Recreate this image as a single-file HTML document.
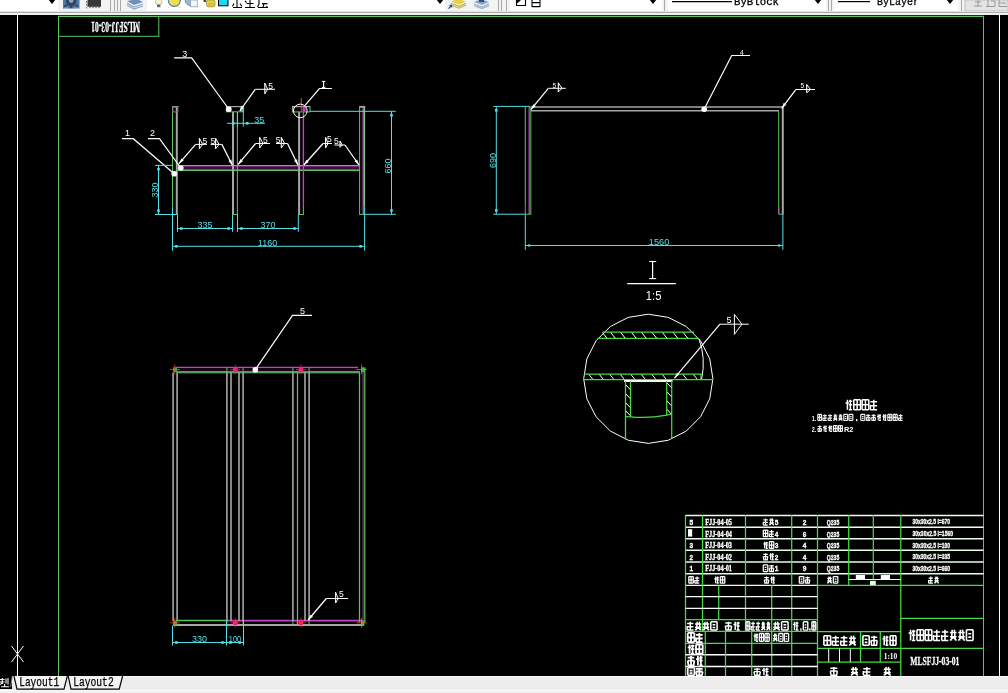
<!DOCTYPE html>
<html><head><meta charset="utf-8"><title>drawing</title>
<style>
html,body{margin:0;padding:0;background:#000;}
body{width:1008px;height:693px;position:relative;overflow:hidden;font-family:"Liberation Sans",sans-serif;}
#tb{position:absolute;left:0;top:0;width:1008px;height:15px;background:#f3f3f3;overflow:hidden;}
#tb .w{position:absolute;top:0;height:11.5px;background:#fff;}
#tb .ln{position:absolute;left:0;width:1008px;}
#tb .sep{position:absolute;top:0;height:11px;width:1px;background:#a8a8a8;}
#tb .arr{position:absolute;top:-1px;width:0;height:0;border-left:4px solid transparent;border-right:4px solid transparent;border-top:5px solid #000;}
#tb .t{position:absolute;font-family:"Liberation Mono",monospace;font-size:11px;line-height:11px;color:#000;top:-4px;white-space:pre;opacity:.99;}
#sb{position:absolute;left:0;top:676px;width:1008px;height:17px;background:#ececec;}
</style></head><body>
<div id="tb">
 <div class="w" style="left:0;width:58px"></div>
 <div class="arr" style="left:48px"></div>
 <div class="w" style="left:147px;width:298px"></div>
 <div class="arr" style="left:436px"></div>
 <div class="w" style="left:510px;width:152px"></div>
 <div class="arr" style="left:649px"></div>
 <div class="w" style="left:668px;width:158px"></div>
 <div class="arr" style="left:814px"></div>
 <div class="w" style="left:834px;width:124px"></div>
 <div class="arr" style="left:946px"></div>
 <div class="sep" style="left:110px"></div><div class="sep" style="left:114px"></div><div class="sep" style="left:117px"></div><div class="sep" style="left:120px"></div>
 <div class="sep" style="left:498px"></div><div class="sep" style="left:501px"></div><div class="sep" style="left:506px"></div>
 <div class="sep" style="left:664px"></div><div class="sep" style="left:828px"></div><div class="sep" style="left:831px"></div><div class="sep" style="left:961px"></div>
 <svg width="1008" height="15" style="position:absolute;left:0;top:0">
  <!-- icons -->
  <rect x="63" y="0" width="16.5" height="8.6" fill="#4a79b2"/><circle cx="71.2" cy="1.2" r="5.2" fill="#3b434f"/><circle cx="71.2" cy="0.6" r="2.3" fill="#7fa6dc"/>
  <path d="M66.5 4.5 l-2 2.6 M75.9 4.5 l2 2.6 M71.2 6 v2" stroke="#3b434f" stroke-width="2"/><path d="M64 8.2 h4 M74.5 8.2 h4" stroke="#a9c8ee" stroke-width="1"/>
  <rect x="87.5" y="0" width="13.5" height="6.8" fill="#38383c"/><path d="M86.5 1 v7 h2 M100 7.6 h-11" stroke="#8c8c90" stroke-width="1" fill="none" stroke-dasharray="2 1"/>
  <path d="M127 1 L137 -1 L143 2 L134 5 Z" fill="#6f8fbc"/><path d="M127 3 L134 7 L143 4 M127 5 L134 9 L143 6" stroke="#8aa6cc" stroke-width="1.2" fill="none"/>
  <ellipse cx="158.7" cy="1.6" rx="3.3" ry="3.2" fill="#fbf4c0" stroke="#b8b090" stroke-width=".8"/><rect x="157" y="4.6" width="3.4" height="2.6" fill="#5a64a0"/>
  <circle cx="174.3" cy="0.4" r="6" fill="#f4dc4a" stroke="#3f7cc0" stroke-width="1.1"/><path d="M169.5 6.5 l-1 1 M179 6.5 l1 1" stroke="#c8a820" stroke-width="1"/>
  <circle cx="190" cy="0.6" r="4.8" fill="#9fb6cc" stroke="#5c7898" stroke-width=".8"/><rect x="190.5" y="0" width="6.8" height="6.8" fill="#f4f6fa" stroke="#8aa0b8" stroke-width=".8"/>
  <rect x="206.5" y="0" width="8.5" height="6.8" rx="2" fill="#e6d544" stroke="#9a8c20" stroke-width=".8"/><path d="M208 3.2 h6 M208 5 h6" stroke="#b8a830" stroke-width=".7"/><rect x="203.6" y="0" width="2.4" height="2" fill="#444"/>
  <rect x="218.5" y="-1" width="9.5" height="6.8" fill="#19d9f2" stroke="#000" stroke-width="1"/>
  <!-- layer name pseudo glyph bottoms -->
  <path d="M233 7.5h9 M237 0v7.5 M234 3.5l-1.5 3 M240 3.5l2 3  M245 7.5h10 M250 0v7.5 M246.5 3.5h7 M245 1l1.5 1.5  M258 7.5h10 M259 0v4l-1.5 3 M262 3.6h5.5 M264 3.6l-1 3.9 M266.5 6l1 1.5" stroke="#000" stroke-width="1.1" fill="none"/>
  <path d="M451 1.5 L458 -1 L466 1.5 L459 4.5 Z" fill="#e6cf3c"/><path d="M451 3.2 L459 6.4 L466 3.2 M451 5 L459 8.2 L466 5" stroke="#c4b23a" stroke-width="1.2" fill="none"/><path d="M448.5 8.6 l3.2-3.2 m0 0 v2.2 m0 -2.2 h-2.2" stroke="#1f3f9c" stroke-width="1.1" fill="none"/>
  <path d="M474 2 L481 -1 L489 2 L482 5 Z" fill="#8aa4c4"/><path d="M474 3.8 L482 7 L489 3.8 M474 5.6 L482 8.6 L489 5.6" stroke="#9db4cf" stroke-width="1.2" fill="none"/><path d="M479 0 h5 v2 h-5z" fill="#2f4f8a"/>
  <path d="M516.5 0 V5.5 H525.5 V0" fill="#fff" stroke="#000" stroke-width="1.1"/><path d="M516.5 0 H521 L516.5 4 Z" fill="#000"/>
  <path d="M532 0 V7 M540 0 V7 M532 2.6 H540 M532 6.6 H540" stroke="#000" stroke-width="1.1" fill="none"/>
  <line x1="672" y1="1.6" x2="732" y2="1.6" stroke="#000" stroke-width="1.2"/>
  <line x1="838" y1="1.6" x2="870" y2="1.6" stroke="#000" stroke-width="1.2"/>
  <defs><filter id="s3" x="0" y="0" width="1008" height="15" filterUnits="userSpaceOnUse"><feGaussianBlur stdDeviation="0.25"/></filter></defs>
  <g filter="url(#s3)"><text x="734" y="4.8" font-family="Liberation Mono, monospace" font-size="11" fill="#000" stroke="#000" stroke-width="0.3" textLength="45" lengthAdjust="spacingAndGlyphs">ByBlock</text>
  <text x="877" y="4.8" font-family="Liberation Mono, monospace" font-size="11" fill="#000" stroke="#000" stroke-width="0.3" textLength="42" lengthAdjust="spacingAndGlyphs">ByLayer</text></g>
  <rect x="965" y="0" width="43" height="11" fill="#e4e4e4" stroke="#bdbdbd" stroke-width="1"/>
  <path d="M974 6h8 M978 0v6.5 M975 2h6  M986 6.5h9 M988 0v6 M991 1h4v5  M999 0v6.5h8 M999 3h7" stroke="#9a9a9a" stroke-width="1" fill="none"/>
 </svg>
 <div class="ln" style="top:11.4px;height:0.8px;background:#e4e4e4"></div>
 <div class="ln" style="top:12.2px;height:1.3px;background:#a9a9a9"></div>
 <div class="ln" style="top:13.5px;height:1.5px;background:#efefef"></div>
</div>
<svg width="1008" height="693" viewBox="0 0 1008 693" style="position:absolute;left:0;top:0">
<defs><filter id="soft" x="0" y="0" width="1008" height="693" filterUnits="userSpaceOnUse"><feGaussianBlur stdDeviation="0.33"/></filter></defs>
<g filter="url(#soft)">
<rect x="0.00" y="15.00" width="1008.00" height="661.00" fill="#000" stroke="none" stroke-width="1" />
<line x1="17.50" y1="15.00" x2="17.50" y2="676.00" stroke="#ffffff" stroke-width="1" />
<line x1="999.50" y1="15.00" x2="999.50" y2="676.00" stroke="#ffffff" stroke-width="1" />
<line x1="58.50" y1="16.00" x2="58.50" y2="676.00" stroke="#5cc45c" stroke-width="1" />
<line x1="58.00" y1="16.40" x2="984.00" y2="16.40" stroke="#5cc45c" stroke-width="1.2" />
<line x1="983.50" y1="16.00" x2="983.50" y2="676.00" stroke="#5cc45c" stroke-width="1" />
<line x1="58.50" y1="36.30" x2="159.20" y2="36.30" stroke="#5cc45c" stroke-width="1" />
<line x1="158.80" y1="16.00" x2="158.80" y2="36.80" stroke="#5cc45c" stroke-width="1" />
<g transform="rotate(180 115.6 26.6)">
<text x="91.20" y="31.50" font-family="Liberation Serif, serif" font-size="14" font-weight="bold" fill="#ffffff" text-anchor="start" textLength="48.80" lengthAdjust="spacingAndGlyphs" stroke="#fff" stroke-width="0.3">MLSFJJ-03-01</text>
</g>
<line x1="11.50" y1="646.00" x2="23.50" y2="662.00" stroke="#ffffff" stroke-width="1" />
<line x1="23.50" y1="646.00" x2="11.50" y2="662.00" stroke="#ffffff" stroke-width="1" />
<line x1="178.00" y1="165.50" x2="359.50" y2="165.50" stroke="#5cc45c" stroke-width="1" />
<rect x="178.00" y="166.20" width="181.50" height="3.80" fill="#2c062c" stroke="none" stroke-width="1" />
<line x1="178.00" y1="166.70" x2="359.50" y2="166.70" stroke="#9a3c9a" stroke-width="0.8" />
<line x1="178.00" y1="169.40" x2="359.50" y2="169.40" stroke="#b646b6" stroke-width="0.9" />
<line x1="178.00" y1="170.50" x2="359.50" y2="170.50" stroke="#5cc45c" stroke-width="1" />
<line x1="172.50" y1="106.50" x2="172.50" y2="206.50" stroke="#5cc45c" stroke-width="1" />
<line x1="172.50" y1="206.50" x2="172.50" y2="250.80" stroke="#4fe0ea" stroke-width="1" />
<line x1="176.80" y1="107.00" x2="176.80" y2="214.50" stroke="#a6a6a6" stroke-width="2" />
<line x1="172.00" y1="106.50" x2="178.60" y2="106.50" stroke="#5cc45c" stroke-width="1" />
<rect x="172.90" y="107.30" width="5.00" height="4.60" fill="none" stroke="#c044c0" stroke-width="1" />
<line x1="233.00" y1="112.00" x2="233.00" y2="214.50" stroke="#a6a6a6" stroke-width="2" />
<line x1="237.40" y1="112.00" x2="237.40" y2="214.50" stroke="#5cc45c" stroke-width="1" />
<rect x="226.20" y="106.60" width="5.20" height="5.20" fill="#3ccf3c" stroke="none" stroke-width="1" opacity="0.9"/>
<rect x="240.20" y="106.60" width="3.20" height="5.20" fill="#3ccf3c" stroke="none" stroke-width="1" opacity="0.9"/>
<rect x="226.40" y="106.50" width="16.80" height="5.30" fill="none" stroke="#5cc45c" stroke-width="1" />
<line x1="226.40" y1="106.60" x2="243.20" y2="106.60" stroke="#a6a6a6" stroke-width="1.2" />
<line x1="240.00" y1="111.30" x2="242.60" y2="107.20" stroke="#c044c0" stroke-width="1.3" />
<line x1="232.00" y1="214.50" x2="237.90" y2="214.50" stroke="#5cc45c" stroke-width="1" />
<line x1="299.10" y1="112.00" x2="299.10" y2="214.50" stroke="#a6a6a6" stroke-width="2" />
<line x1="303.40" y1="112.00" x2="303.40" y2="204.30" stroke="#c044c0" stroke-width="1.4" />
<line x1="303.40" y1="204.30" x2="303.40" y2="214.50" stroke="#5cc45c" stroke-width="1" />
<rect x="292.40" y="106.50" width="17.60" height="5.40" fill="none" stroke="#5cc45c" stroke-width="1" />
<line x1="292.40" y1="106.60" x2="310.00" y2="106.60" stroke="#a6a6a6" stroke-width="1.4" />
<line x1="292.90" y1="107.00" x2="292.90" y2="111.50" stroke="#a6a6a6" stroke-width="1.4" />
<rect x="302.50" y="107.30" width="3.20" height="4.20" fill="#c044c0" stroke="none" stroke-width="1" />
<line x1="298.00" y1="214.50" x2="303.90" y2="214.50" stroke="#5cc45c" stroke-width="1" />
<line x1="359.60" y1="106.50" x2="359.60" y2="214.50" stroke="#5cc45c" stroke-width="1" />
<rect x="360.80" y="107.00" width="2.40" height="107.50" fill="#2c062c" stroke="none" stroke-width="1" />
<line x1="363.30" y1="107.00" x2="363.30" y2="214.50" stroke="#b262b6" stroke-width="1.2" />
<line x1="364.50" y1="106.50" x2="364.50" y2="206.50" stroke="#8cc48c" stroke-width="1.1" />
<line x1="364.60" y1="206.50" x2="364.60" y2="250.80" stroke="#4fe0ea" stroke-width="1" />
<line x1="359.30" y1="106.80" x2="365.20" y2="106.80" stroke="#a6a6a6" stroke-width="1.8" />
<line x1="359.30" y1="214.50" x2="364.60" y2="214.50" stroke="#5cc45c" stroke-width="1" />
<line x1="301.30" y1="98.00" x2="301.30" y2="111.30" stroke="#ff3a1a" stroke-width="1" />
<circle cx="300.30" cy="110.90" r="6.8" fill="none" stroke="#ffffff" stroke-width="1"/>
<polyline points="305.00,105.30 319.40,88.50 331.90,88.50" stroke="#ffffff" stroke-width="1.2" fill="none" />
<line x1="323.60" y1="81.40" x2="323.60" y2="87.40" stroke="#ffffff" stroke-width="1.1" />
<line x1="321.80" y1="81.40" x2="325.40" y2="81.40" stroke="#ffffff" stroke-width="1" />
<line x1="321.80" y1="87.40" x2="325.40" y2="87.40" stroke="#ffffff" stroke-width="1" />
<circle cx="180.80" cy="168.00" r="2.8" fill="#ffffff" stroke="none" stroke-width="1"/>
<circle cx="174.20" cy="173.80" r="2.8" fill="#ffffff" stroke="none" stroke-width="1"/>
<circle cx="228.70" cy="109.20" r="2.8" fill="#ffffff" stroke="none" stroke-width="1"/>
<polyline points="174.20,57.80 191.70,57.80 228.70,109.00" stroke="#ffffff" stroke-width="1.2" fill="none" />
<text x="184.70" y="56.80" font-family="Liberation Sans, sans-serif" font-size="9" font-weight="normal" fill="#ffffff" text-anchor="middle" >3</text>
<polyline points="122.00,138.70 133.30,138.70 174.20,173.80" stroke="#ffffff" stroke-width="1.2" fill="none" />
<text x="127.60" y="136.00" font-family="Liberation Sans, sans-serif" font-size="9" font-weight="normal" fill="#ffffff" text-anchor="middle" >1</text>
<polyline points="148.00,138.70 159.50,138.70 180.80,168.00" stroke="#ffffff" stroke-width="1.2" fill="none" />
<text x="152.60" y="136.00" font-family="Liberation Sans, sans-serif" font-size="9" font-weight="normal" fill="#ffffff" text-anchor="middle" >2</text>
<line x1="239.80" y1="111.00" x2="255.20" y2="89.30" stroke="#ffffff" stroke-width="1.25" />
<polygon points="239.80,111.00 241.74,105.51 244.35,107.36" fill="#ffffff"/>
<line x1="255.20" y1="89.30" x2="275.00" y2="89.30" stroke="#ffffff" stroke-width="1" />
<line x1="264.80" y1="83.00" x2="264.80" y2="93.80" stroke="#ffffff" stroke-width="1.1" />
<polyline points="264.80,83.00 267.60,89.30 264.80,93.80" stroke="#ffffff" stroke-width="1" fill="none" />
<text x="268.20" y="89.20" font-family="Liberation Sans, sans-serif" font-size="8.5" font-weight="normal" fill="#ffffff" text-anchor="start" >5</text>
<line x1="178.80" y1="163.80" x2="195.60" y2="144.40" stroke="#ffffff" stroke-width="1.25" />
<polygon points="178.80,163.80 181.26,158.52 183.68,160.61" fill="#ffffff"/>
<line x1="195.60" y1="144.40" x2="206.90" y2="144.40" stroke="#ffffff" stroke-width="1" />
<line x1="199.40" y1="138.20" x2="199.40" y2="148.80" stroke="#ffffff" stroke-width="1.1" />
<polyline points="199.40,138.20 202.70,144.40 199.40,148.80" stroke="#ffffff" stroke-width="1" fill="none" />
<text x="202.60" y="143.80" font-family="Liberation Sans, sans-serif" font-size="8.5" font-weight="normal" fill="#ffffff" text-anchor="start" >5</text>
<line x1="210.60" y1="144.40" x2="221.90" y2="144.40" stroke="#ffffff" stroke-width="1" />
<line x1="221.90" y1="144.40" x2="232.40" y2="165.20" stroke="#ffffff" stroke-width="1.25" />
<polygon points="232.40,165.20 228.45,160.92 231.30,159.48" fill="#ffffff"/>
<line x1="215.60" y1="138.20" x2="215.60" y2="148.80" stroke="#ffffff" stroke-width="1.1" />
<polyline points="215.60,138.20 219.00,144.40 215.60,148.80" stroke="#ffffff" stroke-width="1" fill="none" />
<text x="210.40" y="143.80" font-family="Liberation Sans, sans-serif" font-size="8.5" font-weight="normal" fill="#ffffff" text-anchor="start" >5</text>
<line x1="238.10" y1="164.40" x2="255.60" y2="143.50" stroke="#ffffff" stroke-width="1.25" />
<polygon points="238.10,164.40 240.47,159.08 242.92,161.13" fill="#ffffff"/>
<line x1="255.60" y1="143.50" x2="270.00" y2="143.50" stroke="#ffffff" stroke-width="1" />
<line x1="259.70" y1="137.30" x2="259.70" y2="147.90" stroke="#ffffff" stroke-width="1.1" />
<polyline points="259.70,137.30 263.00,143.50 259.70,147.90" stroke="#ffffff" stroke-width="1" fill="none" />
<text x="263.00" y="142.90" font-family="Liberation Sans, sans-serif" font-size="8.5" font-weight="normal" fill="#ffffff" text-anchor="start" >5</text>
<line x1="276.00" y1="143.50" x2="287.50" y2="143.50" stroke="#ffffff" stroke-width="1" />
<line x1="287.50" y1="143.50" x2="298.00" y2="165.00" stroke="#ffffff" stroke-width="1.25" />
<polygon points="298.00,165.00 294.10,160.67 296.98,159.27" fill="#ffffff"/>
<line x1="281.30" y1="137.30" x2="281.30" y2="147.90" stroke="#ffffff" stroke-width="1.1" />
<polyline points="281.30,137.30 284.60,143.50 281.30,147.90" stroke="#ffffff" stroke-width="1" fill="none" />
<text x="275.80" y="142.90" font-family="Liberation Sans, sans-serif" font-size="8.5" font-weight="normal" fill="#ffffff" text-anchor="start" >5</text>
<line x1="303.80" y1="165.00" x2="323.10" y2="143.50" stroke="#ffffff" stroke-width="1.25" />
<polygon points="303.80,165.00 306.35,159.76 308.73,161.90" fill="#ffffff"/>
<line x1="323.10" y1="143.50" x2="331.90" y2="143.50" stroke="#ffffff" stroke-width="1" />
<line x1="325.60" y1="137.30" x2="325.60" y2="147.90" stroke="#ffffff" stroke-width="1.1" />
<polyline points="325.60,137.30 328.00,143.50 325.60,147.90" stroke="#ffffff" stroke-width="1" fill="none" />
<text x="327.00" y="141.80" font-family="Liberation Sans, sans-serif" font-size="8.5" font-weight="normal" fill="#ffffff" text-anchor="start" >5</text>
<line x1="334.40" y1="145.00" x2="345.00" y2="145.00" stroke="#ffffff" stroke-width="1" />
<line x1="345.00" y1="145.00" x2="359.00" y2="165.00" stroke="#ffffff" stroke-width="1.25" />
<polygon points="359.00,165.00 354.48,161.33 357.10,159.49" fill="#ffffff"/>
<line x1="340.00" y1="140.90" x2="340.00" y2="147.30" stroke="#ffffff" stroke-width="1.1" />
<polyline points="340.00,140.90 342.20,145.00 340.00,147.30" stroke="#ffffff" stroke-width="1" fill="none" />
<text x="334.00" y="144.40" font-family="Liberation Sans, sans-serif" font-size="8.5" font-weight="normal" fill="#ffffff" text-anchor="start" >5</text>
<line x1="227.00" y1="123.30" x2="265.00" y2="123.30" stroke="#4fe0ea" stroke-width="1" />
<line x1="237.40" y1="112.00" x2="237.40" y2="126.70" stroke="#4fe0ea" stroke-width="1" />
<line x1="243.30" y1="106.80" x2="243.30" y2="126.70" stroke="#4fe0ea" stroke-width="1" />
<rect x="232.00" y="122.00" width="2.60" height="2.60" fill="#4fe0ea" stroke="none" stroke-width="1" />
<rect x="245.90" y="122.00" width="2.60" height="2.60" fill="#4fe0ea" stroke="none" stroke-width="1" />
<text x="259.20" y="123.40" font-family="Liberation Sans, sans-serif" font-size="9" font-weight="normal" fill="#4fe0ea" text-anchor="middle" transform="translate(259.20 123.40) scale(1 1.04) translate(-259.20 -123.40)" >35</text>
<line x1="155.00" y1="165.40" x2="172.50" y2="165.40" stroke="#4fe0ea" stroke-width="1" />
<line x1="155.00" y1="214.50" x2="177.50" y2="214.50" stroke="#4fe0ea" stroke-width="1" />
<line x1="158.50" y1="165.40" x2="158.50" y2="214.50" stroke="#4fe0ea" stroke-width="1" />
<rect x="157.20" y="167.90" width="2.60" height="2.60" fill="#4fe0ea" stroke="none" stroke-width="1" />
<rect x="157.20" y="209.30" width="2.60" height="2.60" fill="#4fe0ea" stroke="none" stroke-width="1" />
<text x="157.70" y="190.00" font-family="Liberation Sans, sans-serif" font-size="9" font-weight="normal" fill="#4fe0ea" text-anchor="middle" transform="rotate(-90 157.70 190.00) translate(157.70 190.00) scale(1 1.04) translate(-157.70 -190.00)" >330</text>
<line x1="177.50" y1="214.50" x2="177.50" y2="231.80" stroke="#4fe0ea" stroke-width="1" />
<line x1="232.50" y1="214.50" x2="232.50" y2="231.80" stroke="#4fe0ea" stroke-width="1" />
<line x1="237.50" y1="214.50" x2="237.50" y2="231.80" stroke="#4fe0ea" stroke-width="1" />
<line x1="298.30" y1="214.50" x2="298.30" y2="231.80" stroke="#4fe0ea" stroke-width="1" />
<line x1="177.50" y1="228.50" x2="232.50" y2="228.50" stroke="#4fe0ea" stroke-width="1" />
<line x1="237.50" y1="228.50" x2="298.30" y2="228.50" stroke="#4fe0ea" stroke-width="1" />
<rect x="180.00" y="227.20" width="2.60" height="2.60" fill="#4fe0ea" stroke="none" stroke-width="1" />
<rect x="227.30" y="227.20" width="2.60" height="2.60" fill="#4fe0ea" stroke="none" stroke-width="1" />
<rect x="240.20" y="227.20" width="2.60" height="2.60" fill="#4fe0ea" stroke="none" stroke-width="1" />
<rect x="293.20" y="227.20" width="2.60" height="2.60" fill="#4fe0ea" stroke="none" stroke-width="1" />
<text x="205.00" y="227.70" font-family="Liberation Sans, sans-serif" font-size="9" font-weight="normal" fill="#4fe0ea" text-anchor="middle" transform="translate(205.00 227.70) scale(1 1.04) translate(-205.00 -227.70)" >335</text>
<text x="268.00" y="227.70" font-family="Liberation Sans, sans-serif" font-size="9" font-weight="normal" fill="#4fe0ea" text-anchor="middle" transform="translate(268.00 227.70) scale(1 1.04) translate(-268.00 -227.70)" >370</text>
<line x1="172.50" y1="246.30" x2="364.60" y2="246.30" stroke="#4fe0ea" stroke-width="1" />
<rect x="175.10" y="245.00" width="2.60" height="2.60" fill="#4fe0ea" stroke="none" stroke-width="1" />
<rect x="359.30" y="245.00" width="2.60" height="2.60" fill="#4fe0ea" stroke="none" stroke-width="1" />
<text x="267.50" y="246.50" font-family="Liberation Sans, sans-serif" font-size="9" font-weight="normal" fill="#4fe0ea" text-anchor="middle" transform="translate(267.50 246.50) scale(1 1.04) translate(-267.50 -246.50)" >1160</text>
<line x1="310.00" y1="111.30" x2="395.80" y2="111.30" stroke="#4fe0ea" stroke-width="1" />
<line x1="364.60" y1="214.30" x2="395.80" y2="214.30" stroke="#4fe0ea" stroke-width="1" />
<line x1="391.50" y1="111.30" x2="391.50" y2="214.30" stroke="#4fe0ea" stroke-width="1" />
<rect x="390.20" y="114.00" width="2.60" height="2.60" fill="#4fe0ea" stroke="none" stroke-width="1" />
<rect x="390.20" y="209.20" width="2.60" height="2.60" fill="#4fe0ea" stroke="none" stroke-width="1" />
<text x="390.60" y="166.00" font-family="Liberation Sans, sans-serif" font-size="9" font-weight="normal" fill="#4fe0ea" text-anchor="middle" transform="rotate(-90 390.60 166.00) translate(390.60 166.00) scale(1 1.04) translate(-390.60 -166.00)" >660</text>
<line x1="530.80" y1="107.00" x2="783.60" y2="107.00" stroke="#a6a6a6" stroke-width="1.5" />
<line x1="530.80" y1="110.80" x2="779.00" y2="110.80" stroke="#a6a6a6" stroke-width="1.5" />
<line x1="525.30" y1="106.50" x2="525.30" y2="206.50" stroke="#5cc45c" stroke-width="1" />
<line x1="525.30" y1="206.50" x2="525.30" y2="214.20" stroke="#c044c0" stroke-width="1.2" />
<line x1="525.30" y1="214.20" x2="525.30" y2="249.80" stroke="#4fe0ea" stroke-width="1" />
<line x1="529.20" y1="107.00" x2="529.20" y2="214.20" stroke="#c044c0" stroke-width="1.3" />
<line x1="530.80" y1="106.50" x2="530.80" y2="214.20" stroke="#5cc45c" stroke-width="1" />
<line x1="525.30" y1="214.20" x2="531.20" y2="214.20" stroke="#5cc45c" stroke-width="1" />
<line x1="778.70" y1="111.00" x2="778.70" y2="214.20" stroke="#5cc45c" stroke-width="1" />
<line x1="782.80" y1="106.50" x2="782.80" y2="214.20" stroke="#a6a6a6" stroke-width="2" />
<line x1="778.70" y1="214.20" x2="783.50" y2="214.20" stroke="#5cc45c" stroke-width="1" />
<line x1="778.90" y1="207.00" x2="778.90" y2="214.00" stroke="#c044c0" stroke-width="1" />
<line x1="782.90" y1="214.20" x2="782.90" y2="249.80" stroke="#4fe0ea" stroke-width="1" />
<line x1="493.30" y1="106.40" x2="530.00" y2="106.40" stroke="#4fe0ea" stroke-width="1" />
<line x1="493.30" y1="214.20" x2="525.30" y2="214.20" stroke="#4fe0ea" stroke-width="1" />
<line x1="496.30" y1="106.40" x2="496.30" y2="214.20" stroke="#4fe0ea" stroke-width="1" />
<rect x="495.00" y="109.00" width="2.60" height="2.60" fill="#4fe0ea" stroke="none" stroke-width="1" />
<rect x="495.00" y="209.10" width="2.60" height="2.60" fill="#4fe0ea" stroke="none" stroke-width="1" />
<text x="495.60" y="160.40" font-family="Liberation Sans, sans-serif" font-size="9" font-weight="normal" fill="#4fe0ea" text-anchor="middle" transform="rotate(-90 495.60 160.40) translate(495.60 160.40) scale(1 1.04) translate(-495.60 -160.40)" >690</text>
<line x1="525.30" y1="245.50" x2="782.90" y2="245.50" stroke="#4fe0ea" stroke-width="1" />
<rect x="528.10" y="244.40" width="2.20" height="2.20" fill="#4fe0ea" stroke="none" stroke-width="1" />
<rect x="777.90" y="244.40" width="2.20" height="2.20" fill="#4fe0ea" stroke="none" stroke-width="1" />
<text x="648.80" y="245.00" font-family="Liberation Sans, sans-serif" font-size="8.5" font-weight="normal" fill="#4fe0ea" text-anchor="start" textLength="20.60" lengthAdjust="spacingAndGlyphs" >1560</text>
<circle cx="704.20" cy="109.20" r="2.8" fill="#ffffff" stroke="none" stroke-width="1"/>
<polyline points="704.20,109.00 731.70,55.50 750.00,55.50" stroke="#ffffff" stroke-width="1.2" fill="none" />
<text x="741.70" y="54.80" font-family="Liberation Sans, sans-serif" font-size="6.5" font-weight="normal" fill="#ffffff" text-anchor="middle" >4</text>
<line x1="548.30" y1="88.30" x2="548.30" y2="88.30" stroke="#ffffff" stroke-width="1" />
<line x1="548.30" y1="88.30" x2="530.90" y2="109.70" stroke="#ffffff" stroke-width="1.25" />
<polygon points="530.90,109.70 533.19,104.35 535.67,106.36" fill="#ffffff"/>
<line x1="558.30" y1="82.80" x2="558.30" y2="92.00" stroke="#ffffff" stroke-width="1.1" />
<polyline points="558.30,82.80 562.00,88.30 558.30,92.00" stroke="#ffffff" stroke-width="1" fill="none" />
<text x="552.60" y="87.60" font-family="Liberation Sans, sans-serif" font-size="6.5" font-weight="normal" fill="#ffffff" text-anchor="start" >5</text>
<line x1="548.30" y1="88.30" x2="565.80" y2="88.30" stroke="#ffffff" stroke-width="1" />
<line x1="781.70" y1="108.30" x2="795.80" y2="89.50" stroke="#ffffff" stroke-width="1.25" />
<polygon points="781.70,108.30 783.78,102.86 786.34,104.78" fill="#ffffff"/>
<line x1="795.80" y1="89.50" x2="815.00" y2="89.50" stroke="#ffffff" stroke-width="1" />
<line x1="806.70" y1="84.40" x2="806.70" y2="92.80" stroke="#ffffff" stroke-width="1.1" />
<polyline points="806.70,84.40 810.50,89.50 806.70,92.80" stroke="#ffffff" stroke-width="1" fill="none" />
<text x="800.60" y="88.20" font-family="Liberation Sans, sans-serif" font-size="6.5" font-weight="normal" fill="#ffffff" text-anchor="start" >5</text>
<polyline points="648.30,443.40 628.34,440.24 610.33,431.06 596.04,416.77 586.86,398.76 583.70,378.80 586.86,358.84 596.04,340.83 610.33,326.54 628.34,317.36 648.30,314.20 668.26,317.36 686.27,326.54 700.56,340.83 709.74,358.84 712.90,378.80 709.74,398.76 700.56,416.77 686.27,431.06 668.26,440.24 648.30,443.40" stroke="#ffffff" stroke-width="1" fill="none" />
<line x1="652.60" y1="261.50" x2="652.60" y2="278.60" stroke="#ffffff" stroke-width="1.2" />
<line x1="649.20" y1="261.50" x2="656.20" y2="261.50" stroke="#ffffff" stroke-width="1.1" />
<line x1="649.20" y1="278.60" x2="656.20" y2="278.60" stroke="#ffffff" stroke-width="1.1" />
<line x1="627.20" y1="283.70" x2="675.80" y2="283.70" stroke="#ffffff" stroke-width="1.2" />
<text x="653.60" y="300.40" font-family="Liberation Sans, sans-serif" font-size="12" font-weight="normal" fill="#ffffff" text-anchor="middle" textLength="15.50" lengthAdjust="spacingAndGlyphs" >1:5</text>
<line x1="602.50" y1="332.20" x2="694.20" y2="332.20" stroke="#44dc44" stroke-width="1.25" />
<line x1="597.50" y1="338.40" x2="698.70" y2="338.40" stroke="#44dc44" stroke-width="1.25" />
<line x1="602.50" y1="332.60" x2="606.80" y2="338.00" stroke="#ffffff" stroke-width="1" />
<line x1="610.80" y1="332.60" x2="615.10" y2="338.00" stroke="#ffffff" stroke-width="1" />
<line x1="620.80" y1="332.60" x2="625.10" y2="338.00" stroke="#ffffff" stroke-width="1" />
<line x1="631.70" y1="332.60" x2="636.00" y2="338.00" stroke="#ffffff" stroke-width="1" />
<line x1="641.70" y1="332.60" x2="646.00" y2="338.00" stroke="#ffffff" stroke-width="1" />
<line x1="652.20" y1="332.60" x2="656.50" y2="338.00" stroke="#ffffff" stroke-width="1" />
<line x1="662.50" y1="332.60" x2="666.80" y2="338.00" stroke="#ffffff" stroke-width="1" />
<line x1="673.30" y1="332.60" x2="677.60" y2="338.00" stroke="#ffffff" stroke-width="1" />
<line x1="683.30" y1="332.60" x2="687.60" y2="338.00" stroke="#ffffff" stroke-width="1" />
<line x1="584.00" y1="374.20" x2="701.70" y2="374.20" stroke="#44dc44" stroke-width="1.25" />
<line x1="583.80" y1="379.50" x2="713.00" y2="379.50" stroke="#44dc44" stroke-width="1.25" />
<line x1="589.00" y1="374.60" x2="592.60" y2="379.10" stroke="#ffffff" stroke-width="1" />
<line x1="599.50" y1="374.60" x2="603.10" y2="379.10" stroke="#ffffff" stroke-width="1" />
<line x1="610.00" y1="374.60" x2="613.60" y2="379.10" stroke="#ffffff" stroke-width="1" />
<line x1="620.50" y1="374.60" x2="624.10" y2="379.10" stroke="#ffffff" stroke-width="1" />
<line x1="631.00" y1="374.60" x2="634.60" y2="379.10" stroke="#ffffff" stroke-width="1" />
<line x1="641.50" y1="374.60" x2="645.10" y2="379.10" stroke="#ffffff" stroke-width="1" />
<line x1="652.00" y1="374.60" x2="655.60" y2="379.10" stroke="#ffffff" stroke-width="1" />
<line x1="662.50" y1="374.60" x2="666.10" y2="379.10" stroke="#ffffff" stroke-width="1" />
<line x1="683.00" y1="374.60" x2="686.60" y2="379.10" stroke="#ffffff" stroke-width="1" />
<line x1="693.50" y1="374.60" x2="697.10" y2="379.10" stroke="#ffffff" stroke-width="1" />
<line x1="700.80" y1="374.20" x2="700.80" y2="379.50" stroke="#44dc44" stroke-width="1" />
<path d="M699 339 Q706 358 701.7 379" stroke="#ffffff" stroke-width="1" fill="none"/>
<line x1="624.00" y1="380.90" x2="672.50" y2="380.90" stroke="#e8ffe8" stroke-width="2" />
<line x1="625.50" y1="381.00" x2="625.50" y2="439.60" stroke="#44dc44" stroke-width="1.25" />
<line x1="630.50" y1="381.00" x2="630.50" y2="416.70" stroke="#44dc44" stroke-width="1.25" />
<line x1="666.70" y1="381.00" x2="666.70" y2="415.20" stroke="#44dc44" stroke-width="1.25" />
<line x1="671.70" y1="381.00" x2="671.70" y2="438.40" stroke="#44dc44" stroke-width="1.25" />
<path d="M625.5 416.6 L630.5 416.8 Q648 418.6 666.7 415.2 L671.7 414" stroke="#44dc44" stroke-width="1.2" fill="none"/>
<line x1="626.00" y1="385.00" x2="630.20" y2="389.60" stroke="#ffffff" stroke-width="1" />
<line x1="626.00" y1="394.00" x2="630.20" y2="398.60" stroke="#ffffff" stroke-width="1" />
<line x1="626.00" y1="403.00" x2="630.20" y2="407.60" stroke="#ffffff" stroke-width="1" />
<line x1="626.00" y1="411.00" x2="630.20" y2="415.60" stroke="#ffffff" stroke-width="1" />
<line x1="667.20" y1="383.00" x2="671.30" y2="387.60" stroke="#ffffff" stroke-width="1" />
<line x1="667.20" y1="392.00" x2="671.30" y2="396.60" stroke="#ffffff" stroke-width="1" />
<line x1="667.20" y1="401.00" x2="671.30" y2="405.60" stroke="#ffffff" stroke-width="1" />
<line x1="667.20" y1="409.50" x2="671.30" y2="414.10" stroke="#ffffff" stroke-width="1" />
<line x1="674.40" y1="378.20" x2="720.00" y2="324.20" stroke="#ffffff" stroke-width="1.2" />
<polygon points="674.40,378.20 677.13,372.65 679.42,374.58" fill="#ffffff"/>
<line x1="720.00" y1="324.20" x2="748.80" y2="324.20" stroke="#ffffff" stroke-width="1" />
<line x1="734.40" y1="314.40" x2="734.40" y2="334.40" stroke="#ffffff" stroke-width="1" />
<polyline points="734.40,314.40 741.90,324.20 734.40,334.40" stroke="#ffffff" stroke-width="1" fill="none" />
<text x="726.60" y="322.80" font-family="Liberation Sans, sans-serif" font-size="9" font-weight="normal" fill="#ffffff" text-anchor="start" >5</text>
<path d="M847.40 399.70L847.40 409.70 M845.50 402.88L848.92 402.88 M848.85 401.29L852.20 401.29 M848.85 404.70L852.20 404.70 M850.37 399.70L850.37 409.70 M848.85 409.70L852.20 409.70" stroke="#ffffff" stroke-width="1.5" fill="none" opacity="1.0"/>
<path d="M853.80 399.70L860.50 399.70 M853.80 399.70L853.80 409.70 M860.50 399.70L860.50 409.70 M853.80 404.70L860.50 404.70 M853.80 409.70L860.50 409.70 M857.15 399.70L857.15 409.70" stroke="#ffffff" stroke-width="1.5" fill="none" opacity="1.0"/>
<path d="M862.10 399.70L868.80 399.70 M862.10 399.70L862.10 409.70 M868.80 399.70L868.80 409.70 M862.10 404.70L868.80 404.70 M862.10 409.70L868.80 409.70 M865.45 399.70L865.45 409.70" stroke="#ffffff" stroke-width="1.5" fill="none" opacity="1.0"/>
<path d="M870.40 401.82L877.10 401.82 M873.75 399.70L873.75 409.70 M870.40 405.76L877.10 405.76 M870.40 409.70L877.10 409.70 M870.40 404.70L870.40 409.70" stroke="#ffffff" stroke-width="1.5" fill="none" opacity="1.0"/>
<text x="811.70" y="420.60" font-family="Liberation Sans, sans-serif" font-size="7" font-weight="bold" fill="#ffffff" text-anchor="start" textLength="4.50" lengthAdjust="spacingAndGlyphs" >1.</text>
<path d="M817.80 414.30L821.60 414.30 M817.80 414.30L817.80 420.50 M821.60 414.30L821.60 420.50 M817.80 417.40L821.60 417.40 M817.80 420.50L821.60 420.50 M819.70 414.30L819.70 420.50" stroke="#ffffff" stroke-width="1.2" fill="none" opacity="0.95"/>
<path d="M823.00 415.66L826.80 415.66 M824.90 414.30L824.90 420.50 M823.00 418.08L826.80 418.08 M823.00 420.50L826.80 420.50 M823.00 417.40L823.00 420.50" stroke="#ffffff" stroke-width="1.2" fill="none" opacity="0.95"/>
<path d="M828.20 415.66L832.00 415.66 M830.10 414.30L830.10 420.50 M828.20 418.08L832.00 418.08 M828.20 420.50L832.00 420.50 M828.20 417.40L828.20 420.50" stroke="#ffffff" stroke-width="1.2" fill="none" opacity="0.95"/>
<path d="M833.40 416.00L837.20 416.00 M834.81 414.30L834.34 420.50 M835.79 414.30L836.50 420.50 M833.40 418.42L837.20 418.42 M833.40 420.50L835.30 418.76 M835.30 418.76L837.20 420.50" stroke="#ffffff" stroke-width="1.2" fill="none" opacity="0.95"/>
<path d="M838.60 416.00L842.40 416.00 M840.01 414.30L839.54 420.50 M840.99 414.30L841.69 420.50 M838.60 418.42L842.40 418.42 M838.60 420.50L840.50 418.76 M840.50 418.76L842.40 420.50" stroke="#ffffff" stroke-width="1.2" fill="none" opacity="0.95"/>
<path d="M843.80 414.30L843.80 420.50 M843.80 414.30L847.60 414.30 M847.60 414.30L847.60 420.50 M844.97 416.68L846.43 416.68 M844.97 418.72L846.43 418.72 M843.80 420.50L847.60 420.50" stroke="#ffffff" stroke-width="1.2" fill="none" opacity="0.95"/>
<path d="M849.00 414.30L849.00 420.50 M849.00 414.30L852.80 414.30 M852.80 414.30L852.80 420.50 M850.17 416.68L851.63 416.68 M850.17 418.72L851.63 418.72 M849.00 420.50L852.80 420.50" stroke="#ffffff" stroke-width="1.2" fill="none" opacity="0.95"/>
<rect x="856.00" y="419.00" width="1.40" height="2.20" fill="#ffffff" stroke="none" stroke-width="1" />
<path d="M860.80 414.30L860.80 420.50 M860.80 414.30L864.80 414.30 M864.80 414.30L864.80 420.50 M862.02 416.68L863.57 416.68 M862.02 418.72L863.57 418.72 M860.80 420.50L864.80 420.50" stroke="#ffffff" stroke-width="1.2" fill="none" opacity="0.95"/>
<path d="M866.20 415.32L870.20 415.32 M868.20 414.30L868.20 417.40 M866.20 417.40L870.20 417.40 M866.20 417.40L866.69 420.50 M870.20 417.40L869.71 420.50 M866.20 420.50L870.20 420.50 M868.20 417.40L868.20 420.50" stroke="#ffffff" stroke-width="1.2" fill="none" opacity="0.95"/>
<path d="M871.60 415.32L875.60 415.32 M873.60 414.30L873.60 417.40 M871.60 417.40L875.60 417.40 M871.60 417.40L872.09 420.50 M875.60 417.40L875.11 420.50 M871.60 420.50L875.60 420.50 M873.60 417.40L873.60 420.50" stroke="#ffffff" stroke-width="1.2" fill="none" opacity="0.95"/>
<path d="M878.23 414.30L878.23 420.50 M877.00 416.34L879.21 416.34 M879.00 415.32L881.00 415.32 M879.00 417.40L881.00 417.40 M879.98 414.30L879.98 420.50 M879.00 420.50L881.00 420.50" stroke="#ffffff" stroke-width="1.2" fill="none" opacity="0.95"/>
<path d="M883.62 414.30L883.62 420.50 M882.40 416.34L884.61 416.34 M884.40 415.32L886.40 415.32 M884.40 417.40L886.40 417.40 M885.38 414.30L885.38 420.50 M884.40 420.50L886.40 420.50" stroke="#ffffff" stroke-width="1.2" fill="none" opacity="0.95"/>
<path d="M887.80 414.30L891.80 414.30 M887.80 414.30L887.80 420.50 M891.80 414.30L891.80 420.50 M887.80 417.40L891.80 417.40 M887.80 420.50L891.80 420.50 M889.80 414.30L889.80 420.50" stroke="#ffffff" stroke-width="1.2" fill="none" opacity="0.95"/>
<path d="M893.20 414.30L897.20 414.30 M893.20 414.30L893.20 420.50 M897.20 414.30L897.20 420.50 M893.20 417.40L897.20 417.40 M893.20 420.50L897.20 420.50 M895.20 414.30L895.20 420.50" stroke="#ffffff" stroke-width="1.2" fill="none" opacity="0.95"/>
<path d="M898.60 415.66L902.60 415.66 M900.60 414.30L900.60 420.50 M898.60 418.08L902.60 418.08 M898.60 420.50L902.60 420.50 M898.60 417.40L898.60 420.50" stroke="#ffffff" stroke-width="1.2" fill="none" opacity="0.95"/>
<text x="811.70" y="431.60" font-family="Liberation Sans, sans-serif" font-size="7" font-weight="bold" fill="#ffffff" text-anchor="start" textLength="4.50" lengthAdjust="spacingAndGlyphs" >2.</text>
<path d="M817.80 426.49L821.60 426.49 M819.70 425.50L819.70 428.50 M817.80 428.50L821.60 428.50 M817.80 428.50L818.27 431.50 M821.60 428.50L821.13 431.50 M817.80 431.50L821.60 431.50 M819.70 428.50L819.70 431.50" stroke="#ffffff" stroke-width="1.2" fill="none" opacity="0.95"/>
<path d="M824.17 425.50L824.17 431.50 M823.00 427.48L825.12 427.48 M824.90 426.49L826.80 426.49 M824.90 428.50L826.80 428.50 M825.84 425.50L825.84 431.50 M824.90 431.50L826.80 431.50" stroke="#ffffff" stroke-width="1.2" fill="none" opacity="0.95"/>
<path d="M829.37 425.50L829.37 431.50 M828.20 427.48L830.31 427.48 M830.10 426.49L832.00 426.49 M830.10 428.50L832.00 428.50 M831.04 425.50L831.04 431.50 M830.10 431.50L832.00 431.50" stroke="#ffffff" stroke-width="1.2" fill="none" opacity="0.95"/>
<path d="M833.40 425.50L837.20 425.50 M833.40 425.50L833.40 431.50 M837.20 425.50L837.20 431.50 M833.40 428.50L837.20 428.50 M833.40 431.50L837.20 431.50 M835.30 425.50L835.30 431.50" stroke="#ffffff" stroke-width="1.2" fill="none" opacity="0.95"/>
<path d="M838.60 425.50L842.40 425.50 M838.60 425.50L838.60 431.50 M842.40 425.50L842.40 431.50 M838.60 428.50L842.40 428.50 M838.60 431.50L842.40 431.50 M840.50 425.50L840.50 431.50" stroke="#ffffff" stroke-width="1.2" fill="none" opacity="0.95"/>
<text x="844.00" y="431.60" font-family="Liberation Sans, sans-serif" font-size="7" font-weight="bold" fill="#ffffff" text-anchor="start" textLength="9.50" lengthAdjust="spacingAndGlyphs" >R2</text>
<line x1="176.00" y1="367.30" x2="358.00" y2="367.30" stroke="#c044c0" stroke-width="1.2" />
<rect x="176.00" y="368.00" width="183.00" height="3.40" fill="#1a001a" stroke="none" stroke-width="1" />
<line x1="176.00" y1="371.80" x2="360.00" y2="371.80" stroke="#a6a6a6" stroke-width="1.2" />
<line x1="178.00" y1="372.80" x2="360.00" y2="372.80" stroke="#5cc45c" stroke-width="1" />
<line x1="176.00" y1="620.50" x2="227.00" y2="620.50" stroke="#5cc45c" stroke-width="1.3" />
<line x1="227.00" y1="620.60" x2="363.00" y2="620.60" stroke="#c044c0" stroke-width="1.6" />
<line x1="173.00" y1="624.90" x2="364.00" y2="624.90" stroke="#a6a6a6" stroke-width="2" />
<line x1="173.10" y1="372.50" x2="173.10" y2="621.00" stroke="#a6a6a6" stroke-width="1.6" />
<line x1="177.10" y1="372.50" x2="177.10" y2="621.00" stroke="#a6a6a6" stroke-width="1.6" />
<line x1="226.90" y1="372.50" x2="226.90" y2="621.00" stroke="#a6a6a6" stroke-width="1.6" />
<line x1="231.00" y1="372.50" x2="231.00" y2="621.00" stroke="#a6a6a6" stroke-width="1.6" />
<line x1="239.00" y1="372.50" x2="239.00" y2="621.00" stroke="#a6a6a6" stroke-width="1.6" />
<line x1="243.10" y1="372.50" x2="243.10" y2="621.00" stroke="#a6a6a6" stroke-width="1.6" />
<line x1="226.90" y1="367.60" x2="226.90" y2="372.40" stroke="#5cc45c" stroke-width="1" />
<line x1="226.90" y1="620.50" x2="226.90" y2="625.00" stroke="#5cc45c" stroke-width="1" />
<line x1="243.10" y1="367.60" x2="243.10" y2="372.40" stroke="#5cc45c" stroke-width="1" />
<line x1="243.10" y1="620.50" x2="243.10" y2="625.00" stroke="#5cc45c" stroke-width="1" />
<line x1="292.90" y1="372.50" x2="292.90" y2="621.00" stroke="#a6a6a6" stroke-width="1.6" />
<line x1="297.50" y1="372.50" x2="297.50" y2="625.00" stroke="#5cc45c" stroke-width="1.2" />
<line x1="305.00" y1="372.50" x2="305.00" y2="621.00" stroke="#a6a6a6" stroke-width="1.6" />
<line x1="309.10" y1="372.50" x2="309.10" y2="621.00" stroke="#a6a6a6" stroke-width="1.6" />
<line x1="292.90" y1="367.60" x2="292.90" y2="372.40" stroke="#5cc45c" stroke-width="1" />
<line x1="292.90" y1="620.50" x2="292.90" y2="625.00" stroke="#5cc45c" stroke-width="1" />
<line x1="309.10" y1="367.60" x2="309.10" y2="372.40" stroke="#5cc45c" stroke-width="1" />
<line x1="309.10" y1="620.50" x2="309.10" y2="625.00" stroke="#5cc45c" stroke-width="1" />
<line x1="359.50" y1="372.50" x2="359.50" y2="622.00" stroke="#5cc45c" stroke-width="1.2" />
<line x1="363.10" y1="367.50" x2="363.10" y2="622.00" stroke="#8e3c90" stroke-width="1.1" />
<line x1="364.80" y1="367.50" x2="364.80" y2="622.00" stroke="#5cc45c" stroke-width="1.2" />
<rect x="173.00" y="367.30" width="4.20" height="4.80" fill="#34c834" stroke="none" stroke-width="1" opacity="0.85"/>
<line x1="169.80" y1="369.50" x2="179.80" y2="369.50" stroke="#ff5a20" stroke-width="0.9" opacity="0.8"/>
<line x1="174.80" y1="364.50" x2="174.80" y2="374.50" stroke="#ff5a20" stroke-width="0.9" opacity="0.8"/>
<rect x="173.00" y="620.60" width="4.20" height="4.80" fill="#34c834" stroke="none" stroke-width="1" opacity="0.85"/>
<line x1="169.80" y1="622.80" x2="179.80" y2="622.80" stroke="#ff5a20" stroke-width="0.9" opacity="0.8"/>
<line x1="174.80" y1="617.80" x2="174.80" y2="627.80" stroke="#ff5a20" stroke-width="0.9" opacity="0.8"/>
<rect x="361.00" y="367.30" width="3.60" height="4.80" fill="#34c834" stroke="none" stroke-width="1" opacity="0.85"/>
<line x1="356.60" y1="369.50" x2="366.60" y2="369.50" stroke="#ff7a20" stroke-width="0.9" opacity="0.8"/>
<line x1="361.60" y1="364.50" x2="361.60" y2="374.50" stroke="#ff7a20" stroke-width="0.9" opacity="0.8"/>
<rect x="361.00" y="620.60" width="3.60" height="4.80" fill="#34c834" stroke="none" stroke-width="1" opacity="0.85"/>
<line x1="356.60" y1="622.80" x2="366.60" y2="622.80" stroke="#ff7a20" stroke-width="0.9" opacity="0.8"/>
<line x1="361.60" y1="617.80" x2="361.60" y2="627.80" stroke="#ff7a20" stroke-width="0.9" opacity="0.8"/>
<circle cx="235.30" cy="369.60" r="2.5" fill="#f01f90" stroke="none" stroke-width="1"/>
<line x1="230.30" y1="369.60" x2="240.30" y2="369.60" stroke="#ff2a2a" stroke-width="0.9" opacity="0.8"/>
<line x1="235.30" y1="364.60" x2="235.30" y2="374.60" stroke="#ff2a2a" stroke-width="0.9" opacity="0.8"/>
<circle cx="300.90" cy="369.60" r="2.5" fill="#f01f90" stroke="none" stroke-width="1"/>
<line x1="295.90" y1="369.60" x2="305.90" y2="369.60" stroke="#ff2a2a" stroke-width="0.9" opacity="0.8"/>
<line x1="300.90" y1="364.60" x2="300.90" y2="374.60" stroke="#ff2a2a" stroke-width="0.9" opacity="0.8"/>
<circle cx="235.30" cy="622.80" r="2.5" fill="#f01f90" stroke="none" stroke-width="1"/>
<line x1="230.30" y1="622.80" x2="240.30" y2="622.80" stroke="#ff2a2a" stroke-width="0.9" opacity="0.8"/>
<line x1="235.30" y1="617.80" x2="235.30" y2="627.80" stroke="#ff2a2a" stroke-width="0.9" opacity="0.8"/>
<circle cx="300.90" cy="622.80" r="2.5" fill="#f01f90" stroke="none" stroke-width="1"/>
<line x1="295.90" y1="622.80" x2="305.90" y2="622.80" stroke="#ff2a2a" stroke-width="0.9" opacity="0.8"/>
<line x1="300.90" y1="617.80" x2="300.90" y2="627.80" stroke="#ff2a2a" stroke-width="0.9" opacity="0.8"/>
<circle cx="255.30" cy="369.70" r="2.8" fill="#ffffff" stroke="none" stroke-width="1"/>
<polyline points="255.30,369.70 292.50,315.30 312.00,315.30" stroke="#ffffff" stroke-width="1.2" fill="none" />
<text x="302.50" y="314.40" font-family="Liberation Sans, sans-serif" font-size="9" font-weight="normal" fill="#ffffff" text-anchor="middle" >5</text>
<line x1="308.10" y1="620.00" x2="326.30" y2="598.50" stroke="#ffffff" stroke-width="1.25" />
<polygon points="308.10,620.00 310.50,614.69 312.94,616.76" fill="#ffffff"/>
<line x1="326.30" y1="598.50" x2="348.10" y2="598.50" stroke="#ffffff" stroke-width="1" />
<line x1="335.60" y1="592.30" x2="335.60" y2="602.90" stroke="#ffffff" stroke-width="1.1" />
<polyline points="335.60,592.30 338.20,598.50 335.60,602.90" stroke="#ffffff" stroke-width="1" fill="none" />
<text x="339.00" y="597.40" font-family="Liberation Sans, sans-serif" font-size="8.5" font-weight="normal" fill="#ffffff" text-anchor="start" >5</text>
<line x1="172.50" y1="625.50" x2="172.50" y2="645.60" stroke="#4fe0ea" stroke-width="1" />
<line x1="226.50" y1="620.50" x2="226.50" y2="645.60" stroke="#4fe0ea" stroke-width="1" />
<line x1="243.50" y1="620.50" x2="243.50" y2="645.60" stroke="#4fe0ea" stroke-width="1" />
<line x1="172.50" y1="642.50" x2="243.50" y2="642.50" stroke="#4fe0ea" stroke-width="1" />
<rect x="175.20" y="641.20" width="2.60" height="2.60" fill="#4fe0ea" stroke="none" stroke-width="1" />
<rect x="221.20" y="641.20" width="2.60" height="2.60" fill="#4fe0ea" stroke="none" stroke-width="1" />
<rect x="229.10" y="641.20" width="2.60" height="2.60" fill="#4fe0ea" stroke="none" stroke-width="1" />
<rect x="238.30" y="641.20" width="2.60" height="2.60" fill="#4fe0ea" stroke="none" stroke-width="1" />
<text x="199.60" y="642.00" font-family="Liberation Sans, sans-serif" font-size="9" font-weight="normal" fill="#4fe0ea" text-anchor="middle" transform="translate(199.60 642.00) scale(1 1.04) translate(-199.60 -642.00)" >330</text>
<text x="235.00" y="642.00" font-family="Liberation Sans, sans-serif" font-size="9" font-weight="normal" fill="#4fe0ea" text-anchor="middle" textLength="12.40" lengthAdjust="spacingAndGlyphs" transform="translate(235.00 642.00) scale(1 1.04) translate(-235.00 -642.00)" >100</text>
<line x1="685.50" y1="515.50" x2="983.50" y2="515.50" stroke="#eaffea" stroke-width="1.5" />
<line x1="685.50" y1="527.20" x2="983.50" y2="527.20" stroke="#eaffea" stroke-width="1.5" />
<line x1="685.50" y1="538.80" x2="983.50" y2="538.80" stroke="#eaffea" stroke-width="1.5" />
<line x1="685.50" y1="550.30" x2="983.50" y2="550.30" stroke="#eaffea" stroke-width="1.5" />
<line x1="685.50" y1="562.00" x2="983.50" y2="562.00" stroke="#eaffea" stroke-width="1.5" />
<line x1="685.50" y1="573.70" x2="983.50" y2="573.70" stroke="#eaffea" stroke-width="1.5" />
<line x1="685.50" y1="585.30" x2="817.50" y2="585.30" stroke="#eaffea" stroke-width="1.2" />
<line x1="817.50" y1="585.40" x2="983.50" y2="585.40" stroke="#44dc44" stroke-width="1.25" />
<line x1="685.50" y1="515.00" x2="685.50" y2="676.00" stroke="#44dc44" stroke-width="1.25" />
<line x1="702.50" y1="515.00" x2="702.50" y2="631.30" stroke="#44dc44" stroke-width="1.25" />
<line x1="745.50" y1="515.00" x2="745.50" y2="631.30" stroke="#44dc44" stroke-width="1.25" />
<line x1="791.70" y1="515.00" x2="791.70" y2="676.00" stroke="#44dc44" stroke-width="1.25" />
<line x1="817.50" y1="515.00" x2="817.50" y2="676.00" stroke="#44dc44" stroke-width="1.25" />
<line x1="848.70" y1="515.00" x2="848.70" y2="585.30" stroke="#44dc44" stroke-width="1.25" />
<line x1="873.30" y1="515.00" x2="873.30" y2="579.50" stroke="#44dc44" stroke-width="1.25" />
<line x1="900.80" y1="515.00" x2="900.80" y2="676.00" stroke="#44dc44" stroke-width="1.25" />
<line x1="718.70" y1="585.30" x2="718.70" y2="619.70" stroke="#44dc44" stroke-width="1.25" />
<line x1="771.70" y1="585.30" x2="771.70" y2="676.00" stroke="#44dc44" stroke-width="1.25" />
<line x1="685.50" y1="596.60" x2="817.50" y2="596.60" stroke="#ffffff" stroke-width="1.35" />
<line x1="685.50" y1="608.40" x2="817.50" y2="608.40" stroke="#ffffff" stroke-width="1.35" />
<line x1="685.50" y1="619.70" x2="817.50" y2="619.70" stroke="#44dc44" stroke-width="1.25" />
<line x1="685.50" y1="631.30" x2="817.50" y2="631.30" stroke="#44dc44" stroke-width="1.25" />
<line x1="685.50" y1="643.40" x2="817.50" y2="643.40" stroke="#44dc44" stroke-width="1.25" />
<line x1="685.50" y1="654.70" x2="817.50" y2="654.70" stroke="#ffffff" stroke-width="1.35" />
<line x1="685.50" y1="666.50" x2="817.50" y2="666.50" stroke="#ffffff" stroke-width="1.35" />
<line x1="705.30" y1="631.30" x2="705.30" y2="676.00" stroke="#44dc44" stroke-width="1.25" />
<line x1="725.50" y1="631.30" x2="725.50" y2="676.00" stroke="#44dc44" stroke-width="1.25" />
<line x1="751.70" y1="631.30" x2="751.70" y2="676.00" stroke="#44dc44" stroke-width="1.25" />
<line x1="848.70" y1="579.50" x2="900.80" y2="579.50" stroke="#eaffea" stroke-width="1" />
<rect x="855.80" y="575.00" width="9.20" height="4.00" fill="#ffffff" stroke="none" stroke-width="1" />
<rect x="880.80" y="575.00" width="9.20" height="4.00" fill="#ffffff" stroke="none" stroke-width="1" />
<rect x="870.00" y="580.80" width="5.80" height="4.20" fill="#d8ffd8" stroke="none" stroke-width="1" />
<line x1="900.80" y1="618.30" x2="983.50" y2="618.30" stroke="#44dc44" stroke-width="1.25" />
<line x1="900.80" y1="648.40" x2="983.50" y2="648.40" stroke="#44dc44" stroke-width="1.25" />
<line x1="817.50" y1="631.50" x2="900.80" y2="631.50" stroke="#44dc44" stroke-width="1.25" />
<line x1="817.50" y1="648.40" x2="900.80" y2="648.40" stroke="#44dc44" stroke-width="1.25" />
<line x1="817.50" y1="662.10" x2="900.80" y2="662.10" stroke="#44dc44" stroke-width="1.25" />
<line x1="860.50" y1="631.50" x2="860.50" y2="662.10" stroke="#44dc44" stroke-width="1.25" />
<line x1="880.30" y1="631.50" x2="880.30" y2="662.10" stroke="#44dc44" stroke-width="1.25" />
<line x1="828.70" y1="648.80" x2="828.70" y2="661.80" stroke="#ffffff" stroke-width="1" />
<line x1="839.50" y1="648.80" x2="839.50" y2="661.80" stroke="#ffffff" stroke-width="1" />
<line x1="850.30" y1="648.80" x2="850.30" y2="661.80" stroke="#ffffff" stroke-width="1" />
<text x="691.30" y="524.90" font-family="Liberation Sans, sans-serif" font-size="8" font-weight="bold" fill="#ffffff" text-anchor="middle" textLength="3.60" lengthAdjust="spacingAndGlyphs" stroke="#fff" stroke-width="0.35">5</text>
<text x="705.20" y="524.90" font-family="Liberation Serif, serif" font-size="8" font-weight="bold" fill="#ffffff" text-anchor="start" textLength="26.80" lengthAdjust="spacingAndGlyphs" stroke="#fff" stroke-width="0.35">FJJ-04-05</text>
<path d="M763.30 519.84L767.80 519.84 M765.55 518.40L765.55 525.00 M763.30 522.42L767.80 522.42 M763.30 525.00L767.80 525.00 M763.30 521.70L763.30 525.00" stroke="#ffffff" stroke-width="1.25" fill="none" opacity="1.0"/>
<path d="M769.30 520.20L773.80 520.20 M770.92 518.40L770.38 525.00 M772.18 518.40L772.99 525.00 M769.30 522.78L773.80 522.78 M769.30 525.00L771.55 523.14 M771.55 523.14L773.80 525.00" stroke="#ffffff" stroke-width="1.25" fill="none" opacity="1.0"/>
<text x="774.80" y="524.90" font-family="Liberation Sans, sans-serif" font-size="8" font-weight="bold" fill="#ffffff" text-anchor="start" textLength="3.60" lengthAdjust="spacingAndGlyphs" stroke="#fff" stroke-width="0.35">5</text>
<text x="804.60" y="524.90" font-family="Liberation Sans, sans-serif" font-size="8" font-weight="bold" fill="#ffffff" text-anchor="middle" textLength="3.60" lengthAdjust="spacingAndGlyphs" stroke="#fff" stroke-width="0.35">2</text>
<text x="826.80" y="524.90" font-family="Liberation Sans, sans-serif" font-size="8" font-weight="bold" fill="#ffffff" text-anchor="start" textLength="12.40" lengthAdjust="spacingAndGlyphs" stroke="#fff" stroke-width="0.35">Q235</text>
<text x="912.50" y="524.30" font-family="Liberation Sans, sans-serif" font-size="8" font-weight="bold" fill="#ffffff" text-anchor="start" textLength="37.50" lengthAdjust="spacingAndGlyphs" stroke="#fff" stroke-width="0.35">30x30x2.5 l=670</text>
<rect x="688.00" y="529.20" width="4.20" height="7.40" fill="#ffffff" stroke="none" stroke-width="1" />
<text x="705.20" y="536.60" font-family="Liberation Serif, serif" font-size="8" font-weight="bold" fill="#ffffff" text-anchor="start" textLength="26.80" lengthAdjust="spacingAndGlyphs" stroke="#fff" stroke-width="0.35">FJJ-04-04</text>
<path d="M763.30 530.10L767.80 530.10 M763.30 530.10L763.30 536.70 M767.80 530.10L767.80 536.70 M763.30 533.40L767.80 533.40 M763.30 536.70L767.80 536.70 M765.55 530.10L765.55 536.70" stroke="#ffffff" stroke-width="1.25" fill="none" opacity="1.0"/>
<path d="M769.30 531.54L773.80 531.54 M771.55 530.10L771.55 536.70 M769.30 534.12L773.80 534.12 M769.30 536.70L773.80 536.70 M769.30 533.40L769.30 536.70" stroke="#ffffff" stroke-width="1.25" fill="none" opacity="1.0"/>
<text x="774.80" y="536.60" font-family="Liberation Sans, sans-serif" font-size="8" font-weight="bold" fill="#ffffff" text-anchor="start" textLength="3.60" lengthAdjust="spacingAndGlyphs" stroke="#fff" stroke-width="0.35">4</text>
<text x="804.60" y="536.60" font-family="Liberation Sans, sans-serif" font-size="8" font-weight="bold" fill="#ffffff" text-anchor="middle" textLength="3.60" lengthAdjust="spacingAndGlyphs" stroke="#fff" stroke-width="0.35">6</text>
<text x="826.80" y="536.60" font-family="Liberation Sans, sans-serif" font-size="8" font-weight="bold" fill="#ffffff" text-anchor="start" textLength="12.40" lengthAdjust="spacingAndGlyphs" stroke="#fff" stroke-width="0.35">Q235</text>
<text x="912.50" y="536.00" font-family="Liberation Sans, sans-serif" font-size="8" font-weight="bold" fill="#ffffff" text-anchor="start" textLength="40.50" lengthAdjust="spacingAndGlyphs" stroke="#fff" stroke-width="0.35">30x30x2.5 l=1560</text>
<text x="691.30" y="548.20" font-family="Liberation Sans, sans-serif" font-size="8" font-weight="bold" fill="#ffffff" text-anchor="middle" textLength="3.60" lengthAdjust="spacingAndGlyphs" stroke="#fff" stroke-width="0.35">3</text>
<text x="705.20" y="548.20" font-family="Liberation Serif, serif" font-size="8" font-weight="bold" fill="#ffffff" text-anchor="start" textLength="26.80" lengthAdjust="spacingAndGlyphs" stroke="#fff" stroke-width="0.35">FJJ-04-03</text>
<path d="M764.65 541.70L764.65 548.30 M763.30 543.86L765.73 543.86 M765.55 542.78L767.80 542.78 M765.55 545.00L767.80 545.00 M766.63 541.70L766.63 548.30 M765.55 548.30L767.80 548.30" stroke="#ffffff" stroke-width="1.25" fill="none" opacity="1.0"/>
<path d="M769.30 541.70L773.80 541.70 M769.30 541.70L769.30 548.30 M773.80 541.70L773.80 548.30 M769.30 545.00L773.80 545.00 M769.30 548.30L773.80 548.30 M771.55 541.70L771.55 548.30" stroke="#ffffff" stroke-width="1.25" fill="none" opacity="1.0"/>
<text x="774.80" y="548.20" font-family="Liberation Sans, sans-serif" font-size="8" font-weight="bold" fill="#ffffff" text-anchor="start" textLength="3.60" lengthAdjust="spacingAndGlyphs" stroke="#fff" stroke-width="0.35">3</text>
<text x="804.60" y="548.20" font-family="Liberation Sans, sans-serif" font-size="8" font-weight="bold" fill="#ffffff" text-anchor="middle" textLength="3.60" lengthAdjust="spacingAndGlyphs" stroke="#fff" stroke-width="0.35">4</text>
<text x="826.80" y="548.20" font-family="Liberation Sans, sans-serif" font-size="8" font-weight="bold" fill="#ffffff" text-anchor="start" textLength="12.40" lengthAdjust="spacingAndGlyphs" stroke="#fff" stroke-width="0.35">Q235</text>
<text x="912.50" y="547.60" font-family="Liberation Sans, sans-serif" font-size="8" font-weight="bold" fill="#ffffff" text-anchor="start" textLength="37.50" lengthAdjust="spacingAndGlyphs" stroke="#fff" stroke-width="0.35">30x30x2.5 l=100</text>
<text x="691.30" y="559.70" font-family="Liberation Sans, sans-serif" font-size="8" font-weight="bold" fill="#ffffff" text-anchor="middle" textLength="3.60" lengthAdjust="spacingAndGlyphs" stroke="#fff" stroke-width="0.35">2</text>
<text x="705.20" y="559.70" font-family="Liberation Serif, serif" font-size="8" font-weight="bold" fill="#ffffff" text-anchor="start" textLength="26.80" lengthAdjust="spacingAndGlyphs" stroke="#fff" stroke-width="0.35">FJJ-04-02</text>
<path d="M763.30 554.28L767.80 554.28 M765.55 553.20L765.55 556.50 M763.30 556.50L767.80 556.50 M763.30 556.50L763.84 559.80 M767.80 556.50L767.26 559.80 M763.30 559.80L767.80 559.80 M765.55 556.50L765.55 559.80" stroke="#ffffff" stroke-width="1.25" fill="none" opacity="1.0"/>
<path d="M770.65 553.20L770.65 559.80 M769.30 555.36L771.73 555.36 M771.55 554.28L773.80 554.28 M771.55 556.50L773.80 556.50 M772.63 553.20L772.63 559.80 M771.55 559.80L773.80 559.80" stroke="#ffffff" stroke-width="1.25" fill="none" opacity="1.0"/>
<text x="774.80" y="559.70" font-family="Liberation Sans, sans-serif" font-size="8" font-weight="bold" fill="#ffffff" text-anchor="start" textLength="3.60" lengthAdjust="spacingAndGlyphs" stroke="#fff" stroke-width="0.35">2</text>
<text x="804.60" y="559.70" font-family="Liberation Sans, sans-serif" font-size="8" font-weight="bold" fill="#ffffff" text-anchor="middle" textLength="3.60" lengthAdjust="spacingAndGlyphs" stroke="#fff" stroke-width="0.35">4</text>
<text x="826.80" y="559.70" font-family="Liberation Sans, sans-serif" font-size="8" font-weight="bold" fill="#ffffff" text-anchor="start" textLength="12.40" lengthAdjust="spacingAndGlyphs" stroke="#fff" stroke-width="0.35">Q235</text>
<text x="912.50" y="559.10" font-family="Liberation Sans, sans-serif" font-size="8" font-weight="bold" fill="#ffffff" text-anchor="start" textLength="37.50" lengthAdjust="spacingAndGlyphs" stroke="#fff" stroke-width="0.35">30x30x2.5 l=335</text>
<text x="691.30" y="571.40" font-family="Liberation Sans, sans-serif" font-size="8" font-weight="bold" fill="#ffffff" text-anchor="middle" textLength="3.60" lengthAdjust="spacingAndGlyphs" stroke="#fff" stroke-width="0.35">1</text>
<text x="705.20" y="571.40" font-family="Liberation Serif, serif" font-size="8" font-weight="bold" fill="#ffffff" text-anchor="start" textLength="26.80" lengthAdjust="spacingAndGlyphs" stroke="#fff" stroke-width="0.35">FJJ-04-01</text>
<path d="M763.30 564.90L763.30 571.50 M763.30 564.90L767.80 564.90 M767.80 564.90L767.80 571.50 M764.65 567.42L766.45 567.42 M764.65 569.58L766.45 569.58 M763.30 571.50L767.80 571.50" stroke="#ffffff" stroke-width="1.25" fill="none" opacity="1.0"/>
<path d="M769.30 565.98L773.80 565.98 M771.55 564.90L771.55 568.20 M769.30 568.20L773.80 568.20 M769.30 568.20L769.84 571.50 M773.80 568.20L773.26 571.50 M769.30 571.50L773.80 571.50 M771.55 568.20L771.55 571.50" stroke="#ffffff" stroke-width="1.25" fill="none" opacity="1.0"/>
<text x="774.80" y="571.40" font-family="Liberation Sans, sans-serif" font-size="8" font-weight="bold" fill="#ffffff" text-anchor="start" textLength="3.60" lengthAdjust="spacingAndGlyphs" stroke="#fff" stroke-width="0.35">1</text>
<text x="804.60" y="571.40" font-family="Liberation Sans, sans-serif" font-size="8" font-weight="bold" fill="#ffffff" text-anchor="middle" textLength="3.60" lengthAdjust="spacingAndGlyphs" stroke="#fff" stroke-width="0.35">9</text>
<text x="826.80" y="571.40" font-family="Liberation Sans, sans-serif" font-size="8" font-weight="bold" fill="#ffffff" text-anchor="start" textLength="12.40" lengthAdjust="spacingAndGlyphs" stroke="#fff" stroke-width="0.35">Q235</text>
<text x="912.50" y="570.80" font-family="Liberation Sans, sans-serif" font-size="8" font-weight="bold" fill="#ffffff" text-anchor="start" textLength="37.50" lengthAdjust="spacingAndGlyphs" stroke="#fff" stroke-width="0.35">30x30x2.5 l=660</text>
<path d="M688.80 576.60L693.30 576.60 M688.80 576.60L688.80 583.20 M693.30 576.60L693.30 583.20 M688.80 579.90L693.30 579.90 M688.80 583.20L693.30 583.20 M691.05 576.60L691.05 583.20" stroke="#ffffff" stroke-width="1.25" fill="none" opacity="1.0"/>
<path d="M694.80 578.04L699.30 578.04 M697.05 576.60L697.05 583.20 M694.80 580.62L699.30 580.62 M694.80 583.20L699.30 583.20 M694.80 579.90L694.80 583.20" stroke="#ffffff" stroke-width="1.25" fill="none" opacity="1.0"/>
<path d="M715.65 576.60L715.65 583.20 M714.30 578.76L716.73 578.76 M716.55 577.68L718.80 577.68 M716.55 579.90L718.80 579.90 M717.63 576.60L717.63 583.20 M716.55 583.20L718.80 583.20" stroke="#ffffff" stroke-width="1.25" fill="none" opacity="1.0"/>
<path d="M720.30 576.60L724.80 576.60 M720.30 576.60L720.30 583.20 M724.80 576.60L724.80 583.20 M720.30 579.90L724.80 579.90 M720.30 583.20L724.80 583.20 M722.55 576.60L722.55 583.20" stroke="#ffffff" stroke-width="1.25" fill="none" opacity="1.0"/>
<path d="M764.30 577.68L768.80 577.68 M766.55 576.60L766.55 579.90 M764.30 579.90L768.80 579.90 M764.30 579.90L764.84 583.20 M768.80 579.90L768.26 583.20 M764.30 583.20L768.80 583.20 M766.55 579.90L766.55 583.20" stroke="#ffffff" stroke-width="1.25" fill="none" opacity="1.0"/>
<path d="M771.65 576.60L771.65 583.20 M770.30 578.76L772.73 578.76 M772.55 577.68L774.80 577.68 M772.55 579.90L774.80 579.90 M773.63 576.60L773.63 583.20 M772.55 583.20L774.80 583.20" stroke="#ffffff" stroke-width="1.25" fill="none" opacity="1.0"/>
<path d="M799.30 576.60L799.30 583.20 M799.30 576.60L803.80 576.60 M803.80 576.60L803.80 583.20 M800.65 579.12L802.45 579.12 M800.65 581.28L802.45 581.28 M799.30 583.20L803.80 583.20" stroke="#ffffff" stroke-width="1.25" fill="none" opacity="1.0"/>
<path d="M805.30 577.68L809.80 577.68 M807.55 576.60L807.55 579.90 M805.30 579.90L809.80 579.90 M805.30 579.90L805.84 583.20 M809.80 579.90L809.26 583.20 M805.30 583.20L809.80 583.20 M807.55 579.90L807.55 583.20" stroke="#ffffff" stroke-width="1.25" fill="none" opacity="1.0"/>
<path d="M827.30 578.40L831.80 578.40 M828.92 576.60L828.38 583.20 M830.18 576.60L830.99 583.20 M827.30 580.98L831.80 580.98 M827.30 583.20L829.55 581.34 M829.55 581.34L831.80 583.20" stroke="#ffffff" stroke-width="1.25" fill="none" opacity="1.0"/>
<path d="M833.30 576.60L833.30 583.20 M833.30 576.60L837.80 576.60 M837.80 576.60L837.80 583.20 M834.65 579.12L836.45 579.12 M834.65 581.28L836.45 581.28 M833.30 583.20L837.80 583.20" stroke="#ffffff" stroke-width="1.25" fill="none" opacity="1.0"/>
<path d="M928.60 578.04L932.90 578.04 M930.75 576.60L930.75 583.20 M928.60 580.62L932.90 580.62 M928.60 583.20L932.90 583.20 M928.60 579.90L928.60 583.20" stroke="#ffffff" stroke-width="1.25" fill="none" opacity="1.0"/>
<path d="M934.40 578.40L938.70 578.40 M935.96 576.60L935.44 583.20 M937.14 576.60L937.92 583.20 M934.40 580.98L938.70 580.98 M934.40 583.20L936.55 581.34 M936.55 581.34L938.70 583.20" stroke="#ffffff" stroke-width="1.25" fill="none" opacity="1.0"/>
<path d="M687.10 623.50L693.40 623.50 M690.25 621.70L690.25 630.10 M687.10 626.80L693.40 626.80 M687.10 630.10L693.40 630.10 M687.10 625.90L687.10 630.10" stroke="#ffffff" stroke-width="1.5" fill="none" opacity="1.0"/>
<path d="M695.00 623.95L701.30 623.95 M697.16 621.70L696.44 630.10 M699.14 621.70L700.22 630.10 M695.00 627.25L701.30 627.25 M695.00 630.10L698.15 627.70 M698.15 627.70L701.30 630.10" stroke="#ffffff" stroke-width="1.5" fill="none" opacity="1.0"/>
<path d="M702.90 623.95L709.20 623.95 M705.06 621.70L704.34 630.10 M707.04 621.70L708.12 630.10 M702.90 627.25L709.20 627.25 M702.90 630.10L706.05 627.70 M706.05 627.70L709.20 630.10" stroke="#ffffff" stroke-width="1.5" fill="none" opacity="1.0"/>
<path d="M710.80 621.70L710.80 630.10 M710.80 621.70L717.10 621.70 M717.10 621.70L717.10 630.10 M712.60 624.85L715.30 624.85 M712.60 627.55L715.30 627.55 M710.80 630.10L717.10 630.10" stroke="#ffffff" stroke-width="1.5" fill="none" opacity="1.0"/>
<path d="M725.30 623.05L731.60 623.05 M728.45 621.70L728.45 625.90 M725.30 625.90L731.60 625.90 M725.30 625.90L726.02 630.10 M731.60 625.90L730.88 630.10 M725.30 630.10L731.60 630.10 M728.45 625.90L728.45 630.10" stroke="#ffffff" stroke-width="1.5" fill="none" opacity="1.0"/>
<path d="M735.20 621.70L735.20 630.10 M733.40 624.40L736.64 624.40 M736.55 623.05L739.70 623.05 M736.55 625.90L739.70 625.90 M737.99 621.70L737.99 630.10 M736.55 630.10L739.70 630.10" stroke="#ffffff" stroke-width="1.5" fill="none" opacity="1.0"/>
<path d="M746.10 621.70L749.80 621.70 M746.10 621.70L746.10 630.10 M749.80 621.70L749.80 630.10 M746.10 625.90L749.80 625.90 M746.10 630.10L749.80 630.10 M747.95 621.70L747.95 630.10" stroke="#ffffff" stroke-width="1.3" fill="none" opacity="1.0"/>
<path d="M751.20 623.50L754.90 623.50 M753.05 621.70L753.05 630.10 M751.20 626.80L754.90 626.80 M751.20 630.10L754.90 630.10 M751.20 625.90L751.20 630.10" stroke="#ffffff" stroke-width="1.3" fill="none" opacity="1.0"/>
<path d="M756.30 623.50L760.00 623.50 M758.15 621.70L758.15 630.10 M756.30 626.80L760.00 626.80 M756.30 630.10L760.00 630.10 M756.30 625.90L756.30 630.10" stroke="#ffffff" stroke-width="1.3" fill="none" opacity="1.0"/>
<path d="M761.40 623.95L765.10 623.95 M762.78 621.70L762.32 630.10 M763.72 621.70L764.41 630.10 M761.40 627.25L765.10 627.25 M761.40 630.10L763.25 627.70 M763.25 627.70L765.10 630.10" stroke="#ffffff" stroke-width="1.3" fill="none" opacity="1.0"/>
<path d="M766.50 623.95L770.20 623.95 M767.88 621.70L767.42 630.10 M768.82 621.70L769.51 630.10 M766.50 627.25L770.20 627.25 M766.50 630.10L768.35 627.70 M768.35 627.70L770.20 630.10" stroke="#ffffff" stroke-width="1.3" fill="none" opacity="1.0"/>
<path d="M773.30 623.95L779.80 623.95 M775.52 621.70L774.78 630.10 M777.58 621.70L778.69 630.10 M773.30 627.25L779.80 627.25 M773.30 630.10L776.55 627.70 M776.55 627.70L779.80 630.10" stroke="#ffffff" stroke-width="1.5" fill="none" opacity="1.0"/>
<path d="M781.60 621.70L781.60 630.10 M781.60 621.70L788.10 621.70 M788.10 621.70L788.10 630.10 M783.45 624.85L786.25 624.85 M783.45 627.55L786.25 627.55 M781.60 630.10L788.10 630.10" stroke="#ffffff" stroke-width="1.5" fill="none" opacity="1.0"/>
<path d="M794.50 621.70L794.50 630.10 M792.90 624.40L795.78 624.40 M795.65 623.05L798.40 623.05 M795.65 625.90L798.40 625.90 M796.93 621.70L796.93 630.10 M795.65 630.10L798.40 630.10" stroke="#ffffff" stroke-width="1.4" fill="none" opacity="1.0"/>
<rect x="800.20" y="628.30" width="1.40" height="2.40" fill="#ffffff" stroke="none" stroke-width="1" />
<path d="M803.30 621.70L803.30 630.10 M803.30 621.70L807.80 621.70 M807.80 621.70L807.80 630.10 M804.65 624.85L806.45 624.85 M804.65 627.55L806.45 627.55 M803.30 630.10L807.80 630.10" stroke="#ffffff" stroke-width="1.4" fill="none" opacity="1.0"/>
<rect x="809.20" y="628.30" width="1.40" height="2.40" fill="#ffffff" stroke="none" stroke-width="1" />
<path d="M811.90 621.70L815.80 621.70 M811.90 621.70L811.90 630.10 M815.80 621.70L815.80 630.10 M811.90 625.90L815.80 625.90 M811.90 630.10L815.80 630.10 M813.85 621.70L813.85 630.10" stroke="#ffffff" stroke-width="1.4" fill="none" opacity="1.0"/>
<path d="M687.70 632.90L694.40 632.90 M687.70 632.90L687.70 642.10 M694.40 632.90L694.40 642.10 M687.70 637.50L694.40 637.50 M687.70 642.10L694.40 642.10 M691.05 632.90L691.05 642.10" stroke="#ffffff" stroke-width="1.8" fill="none" opacity="1.0"/>
<path d="M696.00 634.86L702.70 634.86 M699.35 632.90L699.35 642.10 M696.00 638.48L702.70 638.48 M696.00 642.10L702.70 642.10 M696.00 637.50L696.00 642.10" stroke="#ffffff" stroke-width="1.8" fill="none" opacity="1.0"/>
<path d="M689.60 644.50L689.60 653.70 M687.70 647.44L691.12 647.44 M691.05 645.97L694.40 645.97 M691.05 649.10L694.40 649.10 M692.57 644.50L692.57 653.70 M691.05 653.70L694.40 653.70" stroke="#ffffff" stroke-width="1.8" fill="none" opacity="1.0"/>
<path d="M696.00 644.50L702.70 644.50 M696.00 644.50L696.00 653.70 M702.70 644.50L702.70 653.70 M696.00 649.10L702.70 649.10 M696.00 653.70L702.70 653.70 M699.35 644.50L699.35 653.70" stroke="#ffffff" stroke-width="1.8" fill="none" opacity="1.0"/>
<path d="M687.70 657.57L694.40 657.57 M691.05 656.10L691.05 660.70 M687.70 660.70L694.40 660.70 M687.70 660.70L688.46 665.30 M694.40 660.70L693.64 665.30 M687.70 665.30L694.40 665.30 M691.05 660.70L691.05 665.30" stroke="#ffffff" stroke-width="1.8" fill="none" opacity="1.0"/>
<path d="M697.90 656.10L697.90 665.30 M696.00 659.04L699.42 659.04 M699.35 657.57L702.70 657.57 M699.35 660.70L702.70 660.70 M700.87 656.10L700.87 665.30 M699.35 665.30L702.70 665.30" stroke="#ffffff" stroke-width="1.8" fill="none" opacity="1.0"/>
<path d="M687.70 667.70L687.70 675.30 M687.70 667.70L694.40 667.70 M694.40 667.70L694.40 675.30 M689.60 670.57L692.50 670.57 M689.60 673.03L692.50 673.03 M687.70 675.30L694.40 675.30" stroke="#ffffff" stroke-width="1.8" fill="none" opacity="1.0"/>
<path d="M696.00 668.93L702.70 668.93 M699.35 667.70L699.35 671.50 M696.00 671.50L702.70 671.50 M696.00 671.50L696.76 675.30 M702.70 671.50L701.94 675.30 M696.00 675.30L702.70 675.30 M699.35 671.50L699.35 675.30" stroke="#ffffff" stroke-width="1.8" fill="none" opacity="1.0"/>
<path d="M755.00 633.50L755.00 641.30 M753.70 636.02L756.04 636.02 M755.85 634.76L758.00 634.76 M755.85 637.40L758.00 637.40 M756.89 633.50L756.89 641.30 M755.85 641.30L758.00 641.30" stroke="#ffffff" stroke-width="1.3" fill="none" opacity="1.0"/>
<path d="M759.30 633.50L763.60 633.50 M759.30 633.50L759.30 641.30 M763.60 633.50L763.60 641.30 M759.30 637.40L763.60 637.40 M759.30 641.30L763.60 641.30 M761.45 633.50L761.45 641.30" stroke="#ffffff" stroke-width="1.3" fill="none" opacity="1.0"/>
<path d="M764.90 633.50L769.20 633.50 M764.90 633.50L764.90 641.30 M769.20 633.50L769.20 641.30 M764.90 637.40L769.20 637.40 M764.90 641.30L769.20 641.30 M767.05 633.50L767.05 641.30" stroke="#ffffff" stroke-width="1.3" fill="none" opacity="1.0"/>
<path d="M773.10 635.60L777.40 635.60 M774.66 633.50L774.14 641.30 M775.84 633.50L776.62 641.30 M773.10 638.66L777.40 638.66 M773.10 641.30L775.25 639.08 M775.25 639.08L777.40 641.30" stroke="#ffffff" stroke-width="1.3" fill="none" opacity="1.0"/>
<path d="M778.70 633.50L778.70 641.30 M778.70 633.50L783.00 633.50 M783.00 633.50L783.00 641.30 M780.00 636.44L781.70 636.44 M780.00 638.96L781.70 638.96 M778.70 641.30L783.00 641.30" stroke="#ffffff" stroke-width="1.3" fill="none" opacity="1.0"/>
<path d="M784.30 633.50L784.30 641.30 M784.30 633.50L788.60 633.50 M788.60 633.50L788.60 641.30 M785.60 636.44L787.30 636.44 M785.60 638.96L787.30 638.96 M784.30 641.30L788.60 641.30" stroke="#ffffff" stroke-width="1.3" fill="none" opacity="1.0"/>
<path d="M753.90 669.10L760.40 669.10 M757.15 667.90L757.15 671.60 M753.90 671.60L760.40 671.60 M753.90 671.60L754.64 675.30 M760.40 671.60L759.66 675.30 M753.90 675.30L760.40 675.30 M757.15 671.60L757.15 675.30" stroke="#ffffff" stroke-width="1.4" fill="none" opacity="1.0"/>
<path d="M763.95 667.90L763.95 675.30 M762.10 670.30L765.43 670.30 M765.35 669.10L768.60 669.10 M765.35 671.60L768.60 671.60 M766.83 667.90L766.83 675.30 M765.35 675.30L768.60 675.30" stroke="#ffffff" stroke-width="1.4" fill="none" opacity="1.0"/>
<path d="M823.90 635.70L830.60 635.70 M823.90 635.70L823.90 645.30 M830.60 635.70L830.60 645.30 M823.90 640.50L830.60 640.50 M823.90 645.30L830.60 645.30 M827.25 635.70L827.25 645.30" stroke="#ffffff" stroke-width="1.6" fill="none" opacity="1.0"/>
<path d="M832.30 637.74L839.00 637.74 M835.65 635.70L835.65 645.30 M832.30 641.52L839.00 641.52 M832.30 645.30L839.00 645.30 M832.30 640.50L832.30 645.30" stroke="#ffffff" stroke-width="1.6" fill="none" opacity="1.0"/>
<path d="M840.70 637.74L847.40 637.74 M844.05 635.70L844.05 645.30 M840.70 641.52L847.40 641.52 M840.70 645.30L847.40 645.30 M840.70 640.50L840.70 645.30" stroke="#ffffff" stroke-width="1.6" fill="none" opacity="1.0"/>
<path d="M849.10 638.25L855.80 638.25 M851.38 635.70L850.62 645.30 M853.52 635.70L854.66 645.30 M849.10 642.03L855.80 642.03 M849.10 645.30L852.45 642.54 M852.45 642.54L855.80 645.30" stroke="#ffffff" stroke-width="1.6" fill="none" opacity="1.0"/>
<path d="M862.90 635.70L862.90 645.30 M862.90 635.70L869.20 635.70 M869.20 635.70L869.20 645.30 M864.70 639.27L867.40 639.27 M864.70 642.33L867.40 642.33 M862.90 645.30L869.20 645.30" stroke="#ffffff" stroke-width="1.6" fill="none" opacity="1.0"/>
<path d="M870.90 637.23L877.20 637.23 M874.05 635.70L874.05 640.50 M870.90 640.50L877.20 640.50 M870.90 640.50L871.62 645.30 M877.20 640.50L876.48 645.30 M870.90 645.30L877.20 645.30 M874.05 640.50L874.05 645.30" stroke="#ffffff" stroke-width="1.6" fill="none" opacity="1.0"/>
<path d="M884.20 635.70L884.20 645.30 M882.50 638.76L885.56 638.76 M885.45 637.23L888.40 637.23 M885.45 640.50L888.40 640.50 M886.81 635.70L886.81 645.30 M885.45 645.30L888.40 645.30" stroke="#ffffff" stroke-width="1.6" fill="none" opacity="1.0"/>
<path d="M890.10 635.70L896.00 635.70 M890.10 635.70L890.10 645.30 M896.00 635.70L896.00 645.30 M890.10 640.50L896.00 640.50 M890.10 645.30L896.00 645.30 M893.05 635.70L893.05 645.30" stroke="#ffffff" stroke-width="1.6" fill="none" opacity="1.0"/>
<text x="883.70" y="658.80" font-family="Liberation Serif, serif" font-size="9" font-weight="bold" fill="#ffffff" text-anchor="start" textLength="13.60" lengthAdjust="spacingAndGlyphs" >1:10</text>
<path d="M830.30 668.25L837.40 668.25 M833.85 666.90L833.85 671.10 M830.30 671.10L837.40 671.10 M830.30 671.10L831.10 675.30 M837.40 671.10L836.60 675.30 M830.30 675.30L837.40 675.30 M833.85 671.10L833.85 675.30" stroke="#ffffff" stroke-width="1.5" fill="none" opacity="1.0"/>
<path d="M850.90 669.15L858.00 669.15 M853.30 666.90L852.50 675.30 M855.60 666.90L856.80 675.30 M850.90 672.45L858.00 672.45 M850.90 675.30L854.45 672.90 M854.45 672.90L858.00 675.30" stroke="#ffffff" stroke-width="1.5" fill="none" opacity="1.0"/>
<path d="M863.30 668.70L870.40 668.70 M866.85 666.90L866.85 675.30 M863.30 672.00L870.40 672.00 M863.30 675.30L870.40 675.30 M863.30 671.10L863.30 675.30" stroke="#ffffff" stroke-width="1.5" fill="none" opacity="1.0"/>
<path d="M883.70 669.15L890.80 669.15 M886.10 666.90L885.30 675.30 M888.40 666.90L889.60 675.30 M883.70 672.45L890.80 672.45 M883.70 675.30L887.25 672.90 M887.25 672.90L890.80 675.30" stroke="#ffffff" stroke-width="1.5" fill="none" opacity="1.0"/>
<path d="M910.57 629.70L910.57 640.50 M908.70 633.12L912.07 633.12 M912.00 631.41L915.30 631.41 M912.00 635.10L915.30 635.10 M913.50 629.70L913.50 640.50 M912.00 640.50L915.30 640.50" stroke="#ffffff" stroke-width="1.6" fill="none" opacity="1.0"/>
<path d="M916.95 629.70L923.55 629.70 M916.95 629.70L916.95 640.50 M923.55 629.70L923.55 640.50 M916.95 635.10L923.55 635.10 M916.95 640.50L923.55 640.50 M920.25 629.70L920.25 640.50" stroke="#ffffff" stroke-width="1.6" fill="none" opacity="1.0"/>
<path d="M925.20 629.70L931.80 629.70 M925.20 629.70L925.20 640.50 M931.80 629.70L931.80 640.50 M925.20 635.10L931.80 635.10 M925.20 640.50L931.80 640.50 M928.50 629.70L928.50 640.50" stroke="#ffffff" stroke-width="1.6" fill="none" opacity="1.0"/>
<path d="M933.45 631.98L940.05 631.98 M936.75 629.70L936.75 640.50 M933.45 636.24L940.05 636.24 M933.45 640.50L940.05 640.50 M933.45 635.10L933.45 640.50" stroke="#ffffff" stroke-width="1.6" fill="none" opacity="1.0"/>
<path d="M941.70 631.98L948.30 631.98 M945.00 629.70L945.00 640.50 M941.70 636.24L948.30 636.24 M941.70 640.50L948.30 640.50 M941.70 635.10L941.70 640.50" stroke="#ffffff" stroke-width="1.6" fill="none" opacity="1.0"/>
<path d="M949.95 632.55L956.55 632.55 M952.20 629.70L951.45 640.50 M954.30 629.70L955.42 640.50 M949.95 636.81L956.55 636.81 M949.95 640.50L953.25 637.38 M953.25 637.38L956.55 640.50" stroke="#ffffff" stroke-width="1.6" fill="none" opacity="1.0"/>
<path d="M958.20 632.55L964.80 632.55 M960.45 629.70L959.70 640.50 M962.55 629.70L963.67 640.50 M958.20 636.81L964.80 636.81 M958.20 640.50L961.50 637.38 M961.50 637.38L964.80 640.50" stroke="#ffffff" stroke-width="1.6" fill="none" opacity="1.0"/>
<path d="M966.45 629.70L966.45 640.50 M966.45 629.70L973.05 629.70 M973.05 629.70L973.05 640.50 M968.32 633.69L971.17 633.69 M968.32 637.11L971.17 637.11 M966.45 640.50L973.05 640.50" stroke="#ffffff" stroke-width="1.6" fill="none" opacity="1.0"/>
<text x="910.20" y="664.60" font-family="Liberation Serif, serif" font-size="12.5" font-weight="bold" fill="#ffffff" text-anchor="start" textLength="49.20" lengthAdjust="spacingAndGlyphs" stroke="#fff" stroke-width="0.3">MLSFJJ-03-01</text>
</g>
</svg>
<div id="sb">
 <svg width="1008" height="17" style="position:absolute;left:0;top:0">
  <rect x="0" y="0" width="1008" height="14" fill="#ededed"/>
  <rect x="0" y="0" width="1008" height="1" fill="#fafafa"/>
  <rect x="0" y="14" width="1008" height="1" fill="#fafafa"/>
  <rect x="0" y="15" width="1008" height="2" fill="#f1f1f1"/>
  <rect x="0" y="0" width="12" height="13" fill="#000"/>
  <path d="M0 3.5h4.5 M0 6h4.5 M2.3 2v6 M6 2.5v5 M8 2v6.5 M1 10.8h8 M4.6 8v3 M0 8.6l2-1.5" stroke="#fff" stroke-width="1.1" fill="none"/>
  <path d="M14 0 L17 13.2 L64 13.2 L67.3 0" fill="#f4f4f4" stroke="#000" stroke-width="1.2"/>
  <path d="M12.4 0 L10.6 11" stroke="#8a8a8a" stroke-width="1"/>
  <path d="M68.2 0 L71 13.2 L119.2 13.2 L122.6 0" fill="#f4f4f4" stroke="#000" stroke-width="1.2"/>
  <defs><filter id="s2" x="0" y="0" width="1008" height="17" filterUnits="userSpaceOnUse"><feGaussianBlur stdDeviation="0.25"/></filter></defs><g filter="url(#s2)">
  <text x="19.2" y="9.9" font-family="Liberation Mono, monospace" font-size="12" fill="#000" stroke="#000" stroke-width="0.25" textLength="40" lengthAdjust="spacingAndGlyphs">Layout1</text>
  <text x="73.2" y="9.9" font-family="Liberation Mono, monospace" font-size="12" fill="#000" stroke="#000" stroke-width="0.25" textLength="40.5" lengthAdjust="spacingAndGlyphs">Layout2</text></g>
 </svg>
</div>
</body></html>
